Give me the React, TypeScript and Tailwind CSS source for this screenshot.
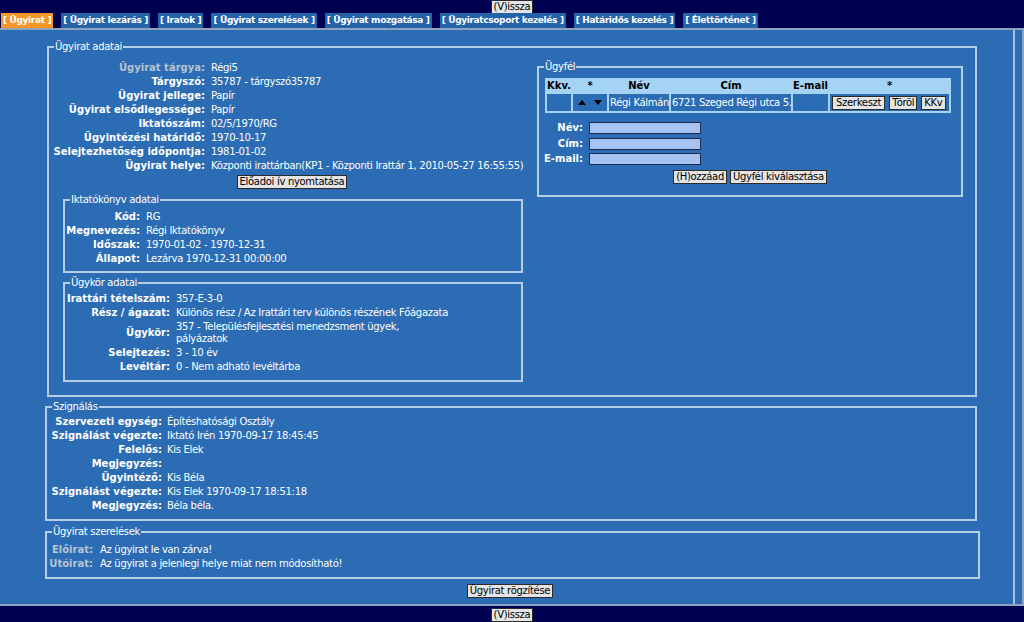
import React from "react";

type Row = { label: string; value: React.ReactNode; dim?: boolean };

// label/value rows, label right-aligned like the old table layout
const Fields = ({ rows, cols }: { rows: Row[]; cols: string }) => (
  <div className={`grid items-center ${cols}`}>
    {rows.map((r, i) => (
      <React.Fragment key={i}>
        <div
          className={`text-right font-bold whitespace-nowrap leading-[12px] py-[1px] ${
            r.dim ? "text-[#b9c4d3]" : "text-white"
          }`}
        >
          {r.label}
        </div>
        <div className="leading-[12px] py-[1px] tracking-[-0.3px] text-white whitespace-nowrap">
          {r.value}
        </div>
      </React.Fragment>
    ))}
  </div>
);

const Box = ({
  title,
  className = "",
  children,
}: {
  title: string;
  className?: string;
  children: React.ReactNode;
}) => (
  <fieldset className={`border-2 border-[#b5cfe9] min-w-0 ${className}`}>
    <legend className="ml-[5px] px-[1px] leading-[12px] tracking-[-0.3px] text-white">
      {title}
    </legend>
    {children}
  </fieldset>
);

const Btn = ({
  children,
  className = "",
}: {
  children: React.ReactNode;
  className?: string;
}) => (
  <button
    className={`h-[14px] border border-[#2b2b2b] bg-[#e5e5e5] px-[2px] text-[10px] leading-[12px] tracking-[-0.3px] text-black whitespace-nowrap ${className}`}
  >
    {children}
  </button>
);

const tabs = [
  "[ Ügyirat ]",
  "[ Ügyirat lezárás ]",
  "[ Iratok ]",
  "[ Ügyirat szerelések ]",
  "[ Ügyirat mozgatása ]",
  "[ Ügyiratcsoport kezelés ]",
  "[ Határidős kezelés ]",
  "[ Élettörténet ]",
];

const Up = () => (
  <svg width="8" height="5" viewBox="0 0 8 5">
    <path d="M0 5 L4 0 L8 5 Z" fill="#000" />
  </svg>
);
const Down = () => (
  <svg width="8" height="5" viewBox="0 0 8 5">
    <path d="M0 0 L8 0 L4 5 Z" fill="#000" />
  </svg>
);

export default function App() {
  return (
    <div className="w-[1024px] h-[622px] overflow-hidden bg-[#000050] font-['DejaVu_Sans',sans-serif] text-[10px]">
      {/* felső vissza gomb */}
      <div className="flex justify-center h-[12px]">
        <Btn className="h-[12px] leading-[10px]">(V)issza</Btn>
      </div>

      {/* fülek */}
      <div className="flex gap-[8px] pl-[1px] mt-[1px] h-[15px]">
        {tabs.map((t, i) => (
          <div
            key={t}
            className={`px-[2px] h-[15px] leading-[15px] text-[9px] font-bold tracking-[-0.35px] text-white whitespace-nowrap ${
              i === 0 ? "bg-[#f5962a]" : "bg-[#2462aa]"
            }`}
          >
            {t}
          </div>
        ))}
      </div>

      <div className="flex h-[578px] w-[1024px] border-y-2 border-r-2 border-[#8ea3bf] bg-[#2b6cb4]">
        <div className="flex-1 flex flex-col border-r-2 border-[#a9c3e0]">
          {/* Ügyirat adatai */}
          <Box title="Ügyirat adatai" className="mt-[11px] ml-[47px] w-[930px]">
            <div className="flex items-start pt-[8px] pb-[13px]">
              <div className="w-[486px] flex flex-col">
                <Fields
                  cols="grid-cols-[156px_auto] gap-x-[6px]"
                  rows={[
                    { label: "Ügyirat tárgya:", value: "Régi5", dim: true },
                    { label: "Tárgyszó:", value: "35787 - tárgyszó35787" },
                    { label: "Ügyirat jellege:", value: "Papír" },
                    { label: "Ügyirat elsődlegessége:", value: "Papír" },
                    { label: "Iktatószám:", value: "02/5/1970/RG" },
                    { label: "Ügyintézési határidő:", value: "1970-10-17" },
                    { label: "Selejtezhetőség időpontja:", value: "1981-01-02" },
                    {
                      label: "Ügyirat helye:",
                      value:
                        "Központi irattárban(KP1 - Központi Irattár 1, 2010-05-27 16:55:55)",
                    },
                  ]}
                />
                <div className="flex justify-center mt-[2px]">
                  <Btn className="px-[1px]">Előadoi ív nyomtatása</Btn>
                </div>

                <Box title="Iktatókönyv adatai" className="mt-[5px] ml-[14px] w-[460px]">
                  <div className="pt-[4px] pb-[5px]">
                    <Fields
                      cols="grid-cols-[75px_auto] gap-x-[6px]"
                      rows={[
                        { label: "Kód:", value: "RG" },
                        { label: "Megnevezés:", value: "Régi Iktatókönyv" },
                        { label: "Időszak:", value: "1970-01-02 - 1970-12-31" },
                        { label: "Állapot:", value: "Lezárva 1970-12-31 00:00:00" },
                      ]}
                    />
                  </div>
                </Box>

                <Box title="Ügykör adatai" className="mt-[4px] ml-[14px] w-[460px]">
                  <div className="pt-[3px] pb-[6px]">
                    <Fields
                      cols="grid-cols-[105px_auto] gap-x-[6px]"
                      rows={[
                        { label: "Irattári tételszám:", value: "357-E-3-0" },
                        {
                          label: "Rész / ágazat:",
                          value: "Különös rész / Az Irattári terv különös részének Főágazata",
                        },
                        {
                          label: "Ügykör:",
                          value: (
                            <>
                              357 - Településfejlesztési menedzsment ügyek,
                              <br />
                              pályázatok
                            </>
                          ),
                        },
                        { label: "Selejtezés:", value: "3 - 10 év" },
                        { label: "Levéltár:", value: "0 - Nem adható levéltárba" },
                      ]}
                    />
                  </div>
                </Box>
              </div>

              {/* Ügyfél */}
              <Box title="Ügyfél" className="ml-[2px] w-[426px]">
                <div className="pt-[5px] pb-[11px]">
                  <div className="ml-[6px] w-[406px] bg-[#a4d3f4] p-[2px] grid grid-cols-[24px_34px_60px_120px_35px_119px] grid-rows-[12px_17px] gap-[2px]">
                    {["Kkv.", "*", "Név", "Cím", "E-mail", "*"].map((h, i) => (
                      <div
                        key={i}
                        className="text-center font-bold text-black leading-[12px] whitespace-nowrap"
                      >
                        {h}
                      </div>
                    ))}
                    <div className="bg-[#2b6cb4]" />
                    <div className="bg-[#2b6cb4] flex items-center justify-center gap-[8px]">
                      <Up />
                      <Down />
                    </div>
                    <div className="bg-[#2b6cb4] flex items-center pl-[1px] text-white tracking-[-0.3px] whitespace-nowrap">
                      Régi Kálmán
                    </div>
                    <div className="bg-[#2b6cb4] flex items-center pl-[1px] text-white tracking-[-0.35px] whitespace-nowrap">
                      6721 Szeged Régi utca 5.
                    </div>
                    <div className="bg-[#2b6cb4]" />
                    <div className="bg-[#2b6cb4] flex items-center gap-[4px] pl-[2px]">
                      <Btn className="px-[3px]">Szerkeszt</Btn>
                      <Btn>Töröl</Btn>
                      <Btn>KKv</Btn>
                    </div>
                  </div>

                  <div className="mt-[9px] flex flex-col gap-[3.5px]">
                    {["Név:", "Cím:", "E-mail:"].map((l) => (
                      <div key={l} className="flex items-center gap-[6px] h-[12px]">
                        <div className="w-[44px] text-right font-bold text-white leading-[12px] whitespace-nowrap">
                          {l}
                        </div>
                        <input className="w-[112px] h-[12px] bg-[#a6c2f0] border border-[#1c2c48] outline-none" />
                      </div>
                    ))}
                  </div>

                  <div className="mt-[5px] flex justify-center gap-[3px]">
                    <Btn>(H)ozzáad</Btn>
                    <Btn>Ügyfél kiválasztása</Btn>
                  </div>
                </div>
              </Box>
            </div>
          </Box>

          {/* Szignálás */}
          <Box title="Szignálás" className="mt-[4px] ml-[45px] w-[932px]">
            <div className="pt-[2px] pb-[6px]">
              <Fields
                cols="grid-cols-[115px_auto] gap-x-[5px]"
                rows={[
                  { label: "Szervezeti egység:", value: "Építéshatósági Osztály" },
                  { label: "Szignálást végezte:", value: "Iktató Irén 1970-09-17 18:45:45" },
                  { label: "Felelős:", value: "Kis Elek" },
                  { label: "Megjegyzés:", value: "\u00a0" },
                  { label: "Ügyintéző:", value: "Kis Béla" },
                  { label: "Szignálást végezte:", value: "Kis Elek 1970-09-17 18:51:18" },
                  { label: "Megjegyzés:", value: "Béla béla." },
                ]}
              />
            </div>
          </Box>

          {/* Ügyirat szerelések */}
          <Box title="Ügyirat szerelések" className="mt-[5px] ml-[45px] w-[935px]">
            <div className="pt-[5px] pb-[6px]">
              <Fields
                cols="grid-cols-[46px_auto] gap-x-[7px]"
                rows={[
                  { label: "Előirat:", value: "Az ügyirat le van zárva!", dim: true },
                  {
                    label: "Utóirat:",
                    value: "Az ügyirat a jelenlegi helye miat nem módosítható!",
                    dim: true,
                  },
                ]}
              />
            </div>
          </Box>

          <div className="flex justify-center mt-[5px] pl-[7px]">
            <Btn className="px-[1px]">Ügyirat rögzítése</Btn>
          </div>
        </div>
        <div className="w-[7px]" />
      </div>

      {/* alsó vissza gomb */}
      <div className="flex justify-center pt-[2px]">
        <Btn className="h-[13px]">(V)issza</Btn>
      </div>
    </div>
  );
}
